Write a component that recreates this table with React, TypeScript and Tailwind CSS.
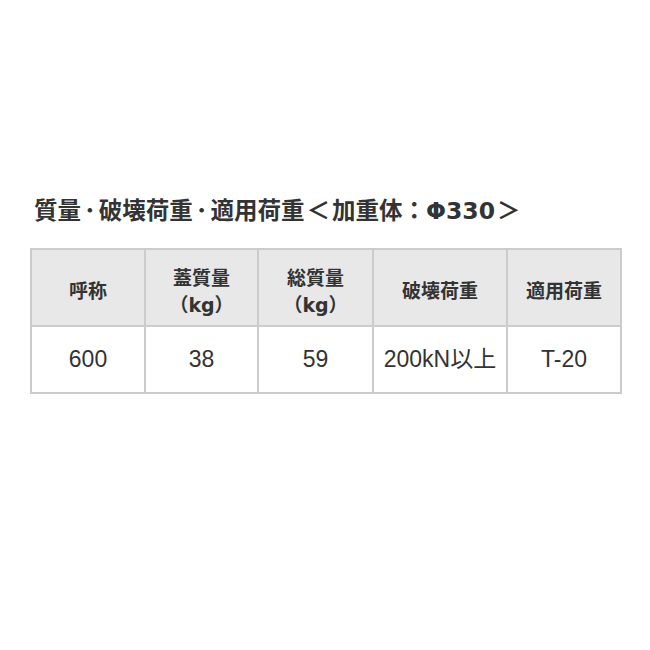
const headers: React.ReactNode[] = [
  '呼称',
  <>蓋質量<br />（kg）</>,
  <>総質量<br />（kg）</>,
  '破壊荷重',
  '適用荷重',
];
const row = ['600', '38', '59', '200kN以上', 'T-20'];
const widths = ['w-[114px]', 'w-[113px]', 'w-[115px]', 'w-[134px]', 'w-[114px]'];

const Dot = () => <span className="mx-[3px]">･</span>;

export default function App() {
  return (
    <div className="w-[650px] h-[650px] bg-white font-['Liberation_Sans','Noto_Sans_CJK_JP',sans-serif] text-[#333]">
      <div className="pt-[195px] pl-[34px] font-['DejaVu_Sans','Noto_Sans_CJK_JP',sans-serif] text-[23.5px] font-bold leading-[32px] text-[#333] whitespace-nowrap">
        質量<Dot />破壊荷重<Dot />適用荷重<span className="mx-[2px]">＜</span>加重体：Φ330<span className="ml-[2px]">＞</span>
      </div>
      <table className="mt-[21px] ml-[30px] border-collapse">
        <thead>
          <tr className="bg-[#e8e8e8]">
            {headers.map((h, i) => (
              <th
                key={i}
                className={`${widths[i]} h-[77px] pt-[8px] border-2 border-[#cccccc] text-center font-['DejaVu_Sans','Noto_Sans_CJK_JP',sans-serif] text-[19px] font-bold leading-[27px] text-[#333]`}
              >
                {h}
              </th>
            ))}
          </tr>
        </thead>
        <tbody>
          <tr>
            {row.map((c, i) => (
              <td
                key={i}
                className={`${widths[i]} h-[67px] border-2 border-[#cccccc] text-center text-[23px] text-[#333] whitespace-nowrap`}
              >
                {c}
              </td>
            ))}
          </tr>
        </tbody>
      </table>
    </div>
  );
}
